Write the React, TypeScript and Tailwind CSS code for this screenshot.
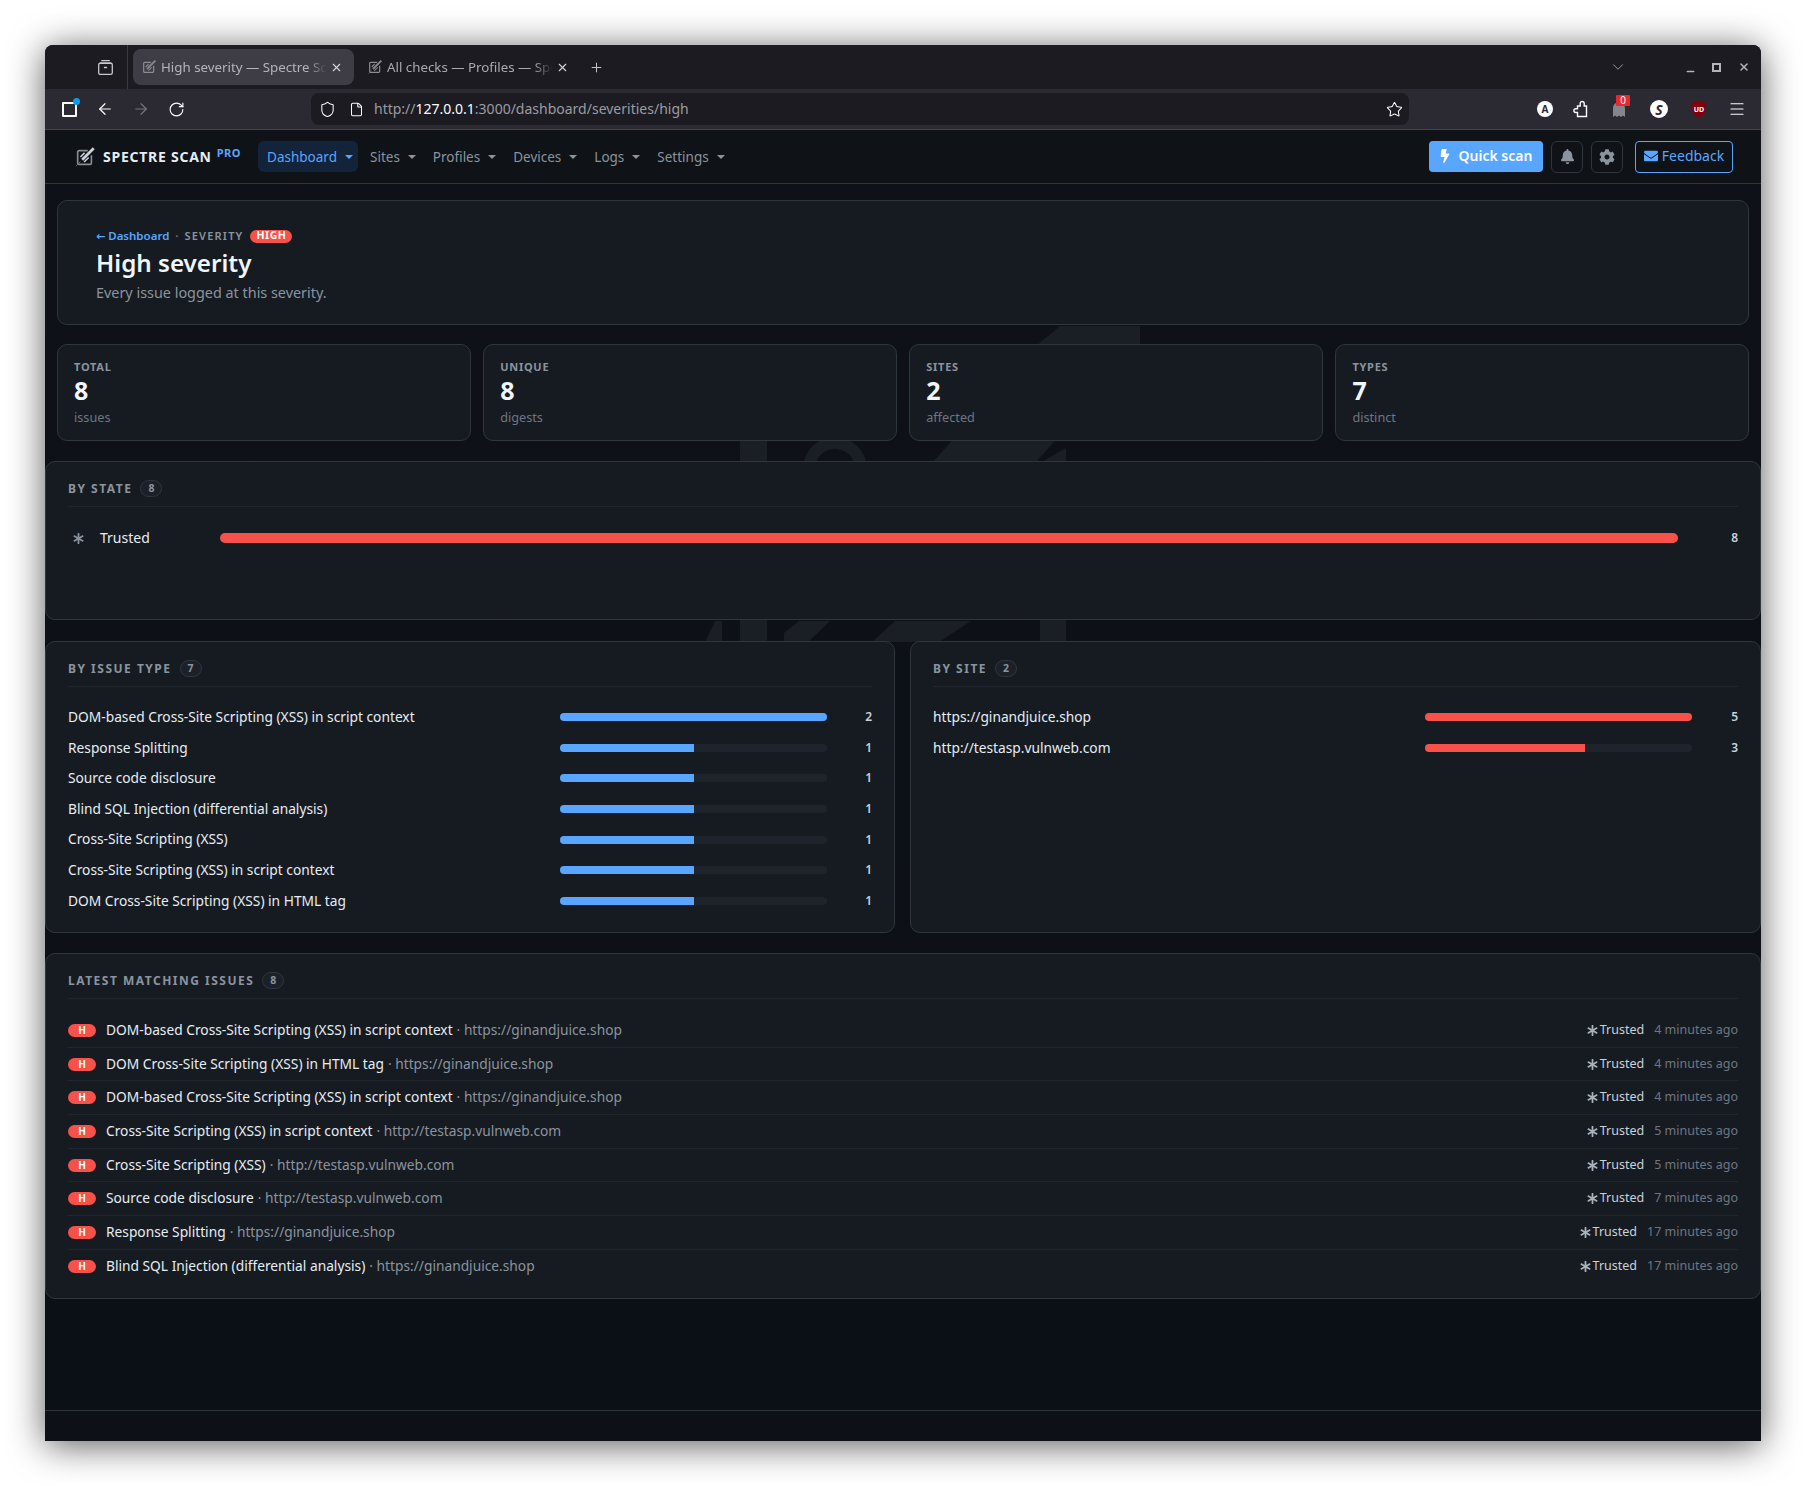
import type { ReactNode } from "react";
import { ArrowLeft, ArrowRight, ChevronDown, File, Menu, Minus, Plus, RotateCw, Shield, Star, X } from "lucide-react";
import { FaAsterisk, FaBell, FaBolt, FaCog, FaEnvelope } from "react-icons/fa";

const stats = [
  { label: "TOTAL", value: "8", sub: "issues" },
  { label: "UNIQUE", value: "8", sub: "digests" },
  { label: "SITES", value: "2", sub: "affected" },
  { label: "TYPES", value: "7", sub: "distinct" },
];

const types = [
  { name: "DOM-based Cross-Site Scripting (XSS) in script context", count: 2 },
  { name: "Response Splitting", count: 1 },
  { name: "Source code disclosure", count: 1 },
  { name: "Blind SQL Injection (differential analysis)", count: 1 },
  { name: "Cross-Site Scripting (XSS)", count: 1 },
  { name: "Cross-Site Scripting (XSS) in script context", count: 1 },
  { name: "DOM Cross-Site Scripting (XSS) in HTML tag", count: 1 },
];

const sites = [
  { name: "https://ginandjuice.shop", count: 5 },
  { name: "http://testasp.vulnweb.com", count: 3 },
];

const issues = [
  { name: "DOM-based Cross-Site Scripting (XSS) in script context", site: "https://ginandjuice.shop", time: "4 minutes ago" },
  { name: "DOM Cross-Site Scripting (XSS) in HTML tag", site: "https://ginandjuice.shop", time: "4 minutes ago" },
  { name: "DOM-based Cross-Site Scripting (XSS) in script context", site: "https://ginandjuice.shop", time: "4 minutes ago" },
  { name: "Cross-Site Scripting (XSS) in script context", site: "http://testasp.vulnweb.com", time: "5 minutes ago" },
  { name: "Cross-Site Scripting (XSS)", site: "http://testasp.vulnweb.com", time: "5 minutes ago" },
  { name: "Source code disclosure", site: "http://testasp.vulnweb.com", time: "7 minutes ago" },
  { name: "Response Splitting", site: "https://ginandjuice.shop", time: "17 minutes ago" },
  { name: "Blind SQL Injection (differential analysis)", site: "https://ginandjuice.shop", time: "17 minutes ago" },
];

const navItems = ["Sites", "Profiles", "Devices", "Logs", "Settings"];

function LogoMark({ className }: { className?: string }) {
  return (
    <svg viewBox="0 0 24 24" className={className} fill="none" aria-hidden="true">
      <path d="M15 5H5.500A1.500 1.500 0 0 0 4 6.500v12A1.500 1.500 0 0 0 5.500 20h12a1.500 1.500 0 0 0 1.500-1.500V10" stroke="#8a8d92" strokeWidth="1.8" />
      <path d="M9 15 21.500 2.500" stroke="currentColor" strokeWidth="3" />
      <path d="M7 12l4.500-4.500M11 17.500l5-5" stroke="currentColor" strokeWidth="1.6" />
      <path d="M7 17l-5 5" stroke="#6b6e73" strokeWidth="1" />
    </svg>
  );
}

function Caret() {
  return <span className="ml-[8px] inline-block h-0 w-0 border-x-[4px] border-t-[4px] border-x-transparent border-t-current" />;
}

function TabBar() {
  return (
    <div className="flex h-[44px] shrink-0 items-center bg-[#1c1b22] text-[#a9a9ae]">
      <div className="flex h-full w-[83px] items-center justify-end border-r border-[#3a3a41] pr-[13px]">
        <svg viewBox="0 0 16 16" className="h-[17px] w-[17px]" fill="none" stroke="#c9c9cd" strokeWidth="1.2" aria-hidden="true">
          <path d="M4 1.500h8M2.500 4h11" />
          <rect x="1.600" y="4" width="12.800" height="10.500" rx="1.500" />
          <path d="M6.500 8h3" />
        </svg>
      </div>
      <div className="ml-[5px] flex h-[36px] w-[221px] items-center rounded-[8px] bg-[#3e3d46] pl-[8px] pr-[6px]">
        <LogoMark className="h-[16px] w-[16px] shrink-0 text-[#85858a]" />
        <span className="ml-[4px] w-[166px] translate-y-[1px] overflow-hidden whitespace-nowrap text-[13.300px] text-[#b4b4b8] [mask-image:linear-gradient(to_right,black_88%,transparent)]">High severity — Spectre Scan</span>
        <X className="ml-[3px] h-[13px] w-[13px] shrink-0 text-[#d5d5d8]" strokeWidth={2} />
      </div>
      <div className="flex h-[36px] w-[221px] items-center pl-[13px] pr-[6px]">
        <LogoMark className="h-[16px] w-[16px] shrink-0 text-[#85858a]" />
        <span className="ml-[4px] w-[166px] translate-y-[1px] overflow-hidden whitespace-nowrap text-[13.300px] [mask-image:linear-gradient(to_right,black_88%,transparent)]">All checks — Profiles — Spectre</span>
        <X className="ml-[3px] h-[13px] w-[13px] shrink-0 text-[#d5d5d8]" strokeWidth={2} />
      </div>
      <Plus className="ml-[14px] h-[15px] w-[15px] text-[#c4c4c8]" strokeWidth={1.6} />
      <div className="ml-auto flex items-center">
        <ChevronDown className="h-[18px] w-[18px] text-[#9a9a9f]" strokeWidth={1.3} />
        <Minus className="ml-[58px] h-[11px] w-[11px] translate-y-[4px] text-[#b5b5b9]" strokeWidth={3} />
        <span className="ml-[16px] h-[9px] w-[9px] border-2 border-[#b5b5b9]" />
        <X className="ml-[17px] mr-[11px] h-[12px] w-[12px] text-[#b5b5b9]" strokeWidth={3} />
      </div>
    </div>
  );
}

function ToolBar() {
  return (
    <div className="flex h-[41px] shrink-0 items-center border-b border-[#44444b] bg-[#2b2a33] text-[#fbfbfe]">
      <span className="relative ml-[17px] h-[15px] w-[15px] rounded-[1px] border-2 border-[#fbfbfe]">
        <span className="absolute -right-[5px] -top-[6px] h-[7px] w-[7px] rounded-full bg-[#0a9ee8]" />
      </span>
      <ArrowLeft className="ml-[19px] h-[18px] w-[18px]" strokeWidth={1.6} />
      <ArrowRight className="ml-[18px] h-[18px] w-[18px] text-[#75747b]" strokeWidth={1.6} />
      <RotateCw className="ml-[18px] h-[17px] w-[17px]" strokeWidth={1.6} />
      <div className="ml-[126px] flex h-[32px] w-[1098px] items-center rounded-[8px] bg-[#1c1b22] pl-[8px] pr-[6px]">
        <Shield className="h-[17px] w-[17px]" strokeWidth={1.5} />
        <File className="ml-[13px] h-[15px] w-[15px]" strokeWidth={1.7} />
        <span className="ml-[10px] -translate-y-[1px] text-[14px] text-[#9b9ba0]">
          http://<span className="text-[#fbfbfe]">127.0.0.1</span>:3000/dashboard/severities/high
        </span>
        <Star className="ml-auto h-[17px] w-[17px]" strokeWidth={1.5} />
      </div>
      <span className="ml-[128px] flex h-[16px] w-[16px] items-center justify-center rounded-full bg-white text-[10px] font-bold text-[#2b2a33]">A</span>
      <svg viewBox="0 0 16 18" className="ml-[19px] h-[18px] w-[16px]" fill="none" stroke="#fbfbfe" strokeWidth="1.4" aria-hidden="true">
        <path d="M5.500 16.500V12.500H3.800a1.900 1.900 0 0 1 0-3.800H5.500V6H8.200V3.500a2 2 0 0 1 4 0V6H14.500V16.500Z" />
      </svg>
      <span className="relative ml-[24px] h-[17px] w-[14px]">
        <svg viewBox="0 0 14 17" className="h-[17px] w-[14px]" aria-hidden="true">
          <path d="M1 16V7a6 6 0 0 1 12 0v9l-2-1.500L9 16l-2-1.500L5 16l-2-1.500z" fill="#85858c" />
        </svg>
        <span className="absolute -right-[4px] -top-[6px] flex h-[11px] w-[14px] items-center justify-center rounded-[1px] bg-[#e8282f] text-[10px] leading-none text-white">0</span>
      </span>
      <span className="ml-[24px] flex h-[18px] w-[18px] items-center justify-center rounded-full bg-white text-[14px] font-bold italic text-[#2b2a33]">S</span>
      <span className="relative ml-[23px] flex h-[18px] w-[16px] items-center justify-center">
        <svg viewBox="0 0 16 18" className="absolute inset-0 h-[18px] w-[16px]" aria-hidden="true">
          <path d="M8 0.500 15 2.500V10c0 3.500-3.500 6-7 7.500C4.500 16 1 13.500 1 10V2.500z" fill="#800010" />
        </svg>
        <span className="relative text-[7px] font-bold leading-none text-white">UD</span>
      </span>
      <Menu className="ml-[21px] h-[18px] w-[18px]" strokeWidth={1.6} />
    </div>
  );
}

function TopNav() {
  return (
    <nav className="flex h-[54px] shrink-0 items-center border-b border-[#30363d] bg-[#0f1217] pl-[29px] pr-[28px]">
      <LogoMark className="h-[22px] w-[22px] text-[#c9d1d9]" />
      <span className="ml-[7px] text-[14px] font-bold tracking-[0.75px] text-[#e6edf3]">SPECTRE SCAN</span>
      <span className="ml-[5px] -translate-y-[3px] text-[11px] font-bold tracking-[0.5px] text-[#58a6ff]">PRO</span>
      <div className="ml-[17px] flex h-[31px] w-[100px] items-center justify-center rounded-[6px] bg-[#13233a] pl-[4px] pt-[1px] text-[13.500px] text-[#58a6ff]">
        Dashboard
        <Caret />
      </div>
      <div className="ml-[12px] flex items-center gap-[17px] pt-[1px] text-[13.500px] text-[#8b949e]">
        {navItems.map((item) => (
          <span key={item} className="flex items-center">
            {item}
            <Caret />
          </span>
        ))}
      </div>
      <div className="ml-auto flex items-center">
        <button type="button" className="flex h-[31px] w-[114px] items-center justify-center rounded-[4px] bg-[#58a6ff] pb-[2px] pr-[2px] text-[14px] font-semibold text-white">
          <FaBolt className="mr-[7px] h-[14px] w-[14px]" />
          Quick scan
        </button>
        <span className="ml-[8px] flex h-[32px] w-[32px] items-center justify-center rounded-[6px] border border-[#30363d] text-[#8b949e]">
          <FaBell className="h-[15px] w-[15px]" />
        </span>
        <span className="ml-[8px] flex h-[32px] w-[32px] items-center justify-center rounded-[6px] border border-[#30363d] text-[#8b949e]">
          <FaCog className="h-[16px] w-[16px]" />
        </span>
        <span className="ml-[12px] flex h-[32px] w-[98px] items-center justify-center rounded-[4px] border border-[#58a6ff] pb-[2px] text-[14px] text-[#58a6ff]">
          <FaEnvelope className="mr-[4px] h-[14px] w-[14px]" />
          Feedback
        </span>
      </div>
    </nav>
  );
}

// big faint logo behind the cards, only the parts in the gaps can be seen
function Watermark() {
  return (
    <svg viewBox="0 0 1716 1228" className="pointer-events-none absolute left-0 top-0 h-[1228px] w-[1716px]" fill="#1a1e25" aria-hidden="true">
      <g transform="translate(-45 -183)">
        <rect x="740" y="430" width="27" height="300" />
        <path d="M1040 462 1066 447V730H1040Z" />
        <path fillRule="evenodd" d="M835 436a32 32 0 1 1 0 64a32 32 0 1 1 0-64zM835 448a20 20 0 1 0 0 40a20 20 0 1 0 0-40z" />
        <path d="M1060 325H1140V345L1036 461H933L1036 345Z" />
        <path d="M895 620H971L939 641H872Z" />
        <path d="M799 620H830L808 641H784V632Z" />
        <path d="M715 620H722V641H705Z" />
      </g>
    </svg>
  );
}

function Panel({ title, count, className, children }: { title: string; count: number; className?: string; children: ReactNode }) {
  return (
    <section className={`relative rounded-[10px] border border-[#30363d] bg-[#161b22] px-[22px] ${className ?? ""}`}>
      <div className="flex h-[45px] items-center border-b border-[#21262d] pt-[9px] text-[12px] font-bold tracking-[1.5px] text-[#8b949e]">
        {title}
        <span className="ml-[8px] flex h-[17px] w-[22px] items-center justify-center rounded-full border border-[#30363d] bg-[#1c2129] text-[10.500px] tracking-normal">{count}</span>
      </div>
      {children}
    </section>
  );
}

function BarRow({ name, count, max, color }: { name: string; count: number; max: number; color: string }) {
  return (
    <div className="grid h-[30.600px] grid-cols-[492px_267px_1fr] items-center">
      <span className="text-[13.760px] text-[#e6edf3]">{name}</span>
      <div className="h-[8px] overflow-hidden rounded-full bg-[#1f242c]">
        <div className={`h-full ${color}`} style={{ width: `${(count / max) * 100}%` }} />
      </div>
      <span className="text-right text-[12px] font-semibold text-[#c9d1d9]">{count}</span>
    </div>
  );
}

export default function App() {
  return (
    <div className="h-[1486px] w-[1806px] bg-white p-[45px] font-['Noto_Sans',sans-serif]">
      <div className="flex h-[1396px] w-[1716px] flex-col overflow-hidden rounded-t-[8px] bg-[#0c1017] shadow-[0_4px_36px_rgba(0,0,0,0.65)]">
        <TabBar />
        <ToolBar />
        <TopNav />
        <main className="relative flex-1 bg-gradient-to-b from-[#0e1218] to-[#0b0f16] pt-[16px]">
          <Watermark />
          <div className="relative mx-[12px] flex h-[125px] flex-col rounded-[10px] border border-[#30363d] bg-[#161b22] pl-[38px] pt-[26px]">
            <div className="flex h-[18px] items-center text-[11.500px] font-semibold">
              <span className="text-[#58a6ff]">
                <span className="font-['DejaVu_Sans',sans-serif] text-[11px]">←</span> Dashboard
              </span>
              <span className="ml-[6px] text-[#6e7681]">·</span>
              <span className="ml-[6px] text-[11px] tracking-[1.2px] text-[#8b949e]">SEVERITY</span>
              <span className="ml-[7px] flex h-[13px] w-[42px] items-center justify-center rounded-full bg-[#f85149] text-[10.500px] font-bold tracking-[0.5px] text-white">HIGH</span>
            </div>
            <h1 className="mt-[1px] text-[24.200px] font-semibold leading-[34px] text-[#f0f6fc]">High severity</h1>
            <p className="mt-[3px] text-[14.400px] leading-[20px] text-[#8b949e]">Every issue logged at this severity.</p>
          </div>

          <div className="relative mx-[12px] mt-[19px] grid grid-cols-4 gap-[12.500px]">
            {stats.map((s) => (
              <div key={s.label} className="h-[97px] rounded-[10px] border border-[#30363d] bg-[#161b22] pl-[16px] pt-[14px]">
                <div className="text-[11px] font-bold leading-[16px] tracking-[0.75px] text-[#8b949e]">{s.label}</div>
                <div className="-mt-[1px] text-[25px] font-bold leading-[32px] text-[#f0f6fc]">{s.value}</div>
                <div className="mt-[2px] text-[12.700px] leading-[18px] text-[#6e7681]">{s.sub}</div>
              </div>
            ))}
          </div>

          <Panel title="BY STATE" count={8} className="mt-[20px] h-[159px]">
            <div className="mt-[19px] flex h-[24px] items-center">
              <FaAsterisk className="ml-[5px] h-[11px] w-[11px] text-[#8b949e]" />
              <span className="ml-[16px] w-[120px] -translate-y-[1px] text-[14px] text-[#e6edf3]">Trusted</span>
              <div className="h-[10px] w-[1458px] rounded-full bg-[#f85149]" />
              <span className="ml-auto text-[12px] font-semibold text-[#c9d1d9]">8</span>
            </div>
          </Panel>

          <div className="relative mt-[21px] grid grid-cols-[850px_1fr] gap-[15px]">
            <Panel title="BY ISSUE TYPE" count={7} className="h-[292px]">
              <div className="mt-[15px]">
                {types.map((t) => (
                  <BarRow key={t.name} name={t.name} count={t.count} max={2} color="bg-[#58a6ff]" />
                ))}
              </div>
            </Panel>
            <Panel title="BY SITE" count={2} className="h-[292px]">
              <div className="mt-[15px]">
                {sites.map((s) => (
                  <BarRow key={s.name} name={s.name} count={s.count} max={5} color="bg-[#f85149]" />
                ))}
              </div>
            </Panel>
          </div>

          <Panel title="LATEST MATCHING ISSUES" count={8} className="mt-[20px] h-[346px]">
            <div className="mt-[15px]">
              {issues.map((it, i) => (
                <div key={i} className="flex h-[33.700px] items-center border-b border-[#21262d] last:border-b-0">
                  <span className="flex h-[13px] w-[28px] items-center justify-center rounded-full bg-[#f85149] text-[10px] font-bold text-white">H</span>
                  <span className="ml-[10px] text-[13.760px] text-[#e6edf3]">{it.name}</span>
                  <span className="ml-[4px] text-[13.760px] text-[#8b949e]">· {it.site}</span>
                  <span className="ml-auto flex items-center text-[12.500px] text-[#c9d1d9]">
                    <FaAsterisk className="mr-[2px] h-[11px] w-[11px] text-[#a9b2bb]" />
                    Trusted
                  </span>
                  <span className="ml-[10px] text-[12.500px] text-[#6e7681]">{it.time}</span>
                </div>
              ))}
            </div>
          </Panel>
        </main>
        <footer className="h-[31px] shrink-0 border-t border-[#30363d] bg-[#0d1117]" />
      </div>
    </div>
  );
}
